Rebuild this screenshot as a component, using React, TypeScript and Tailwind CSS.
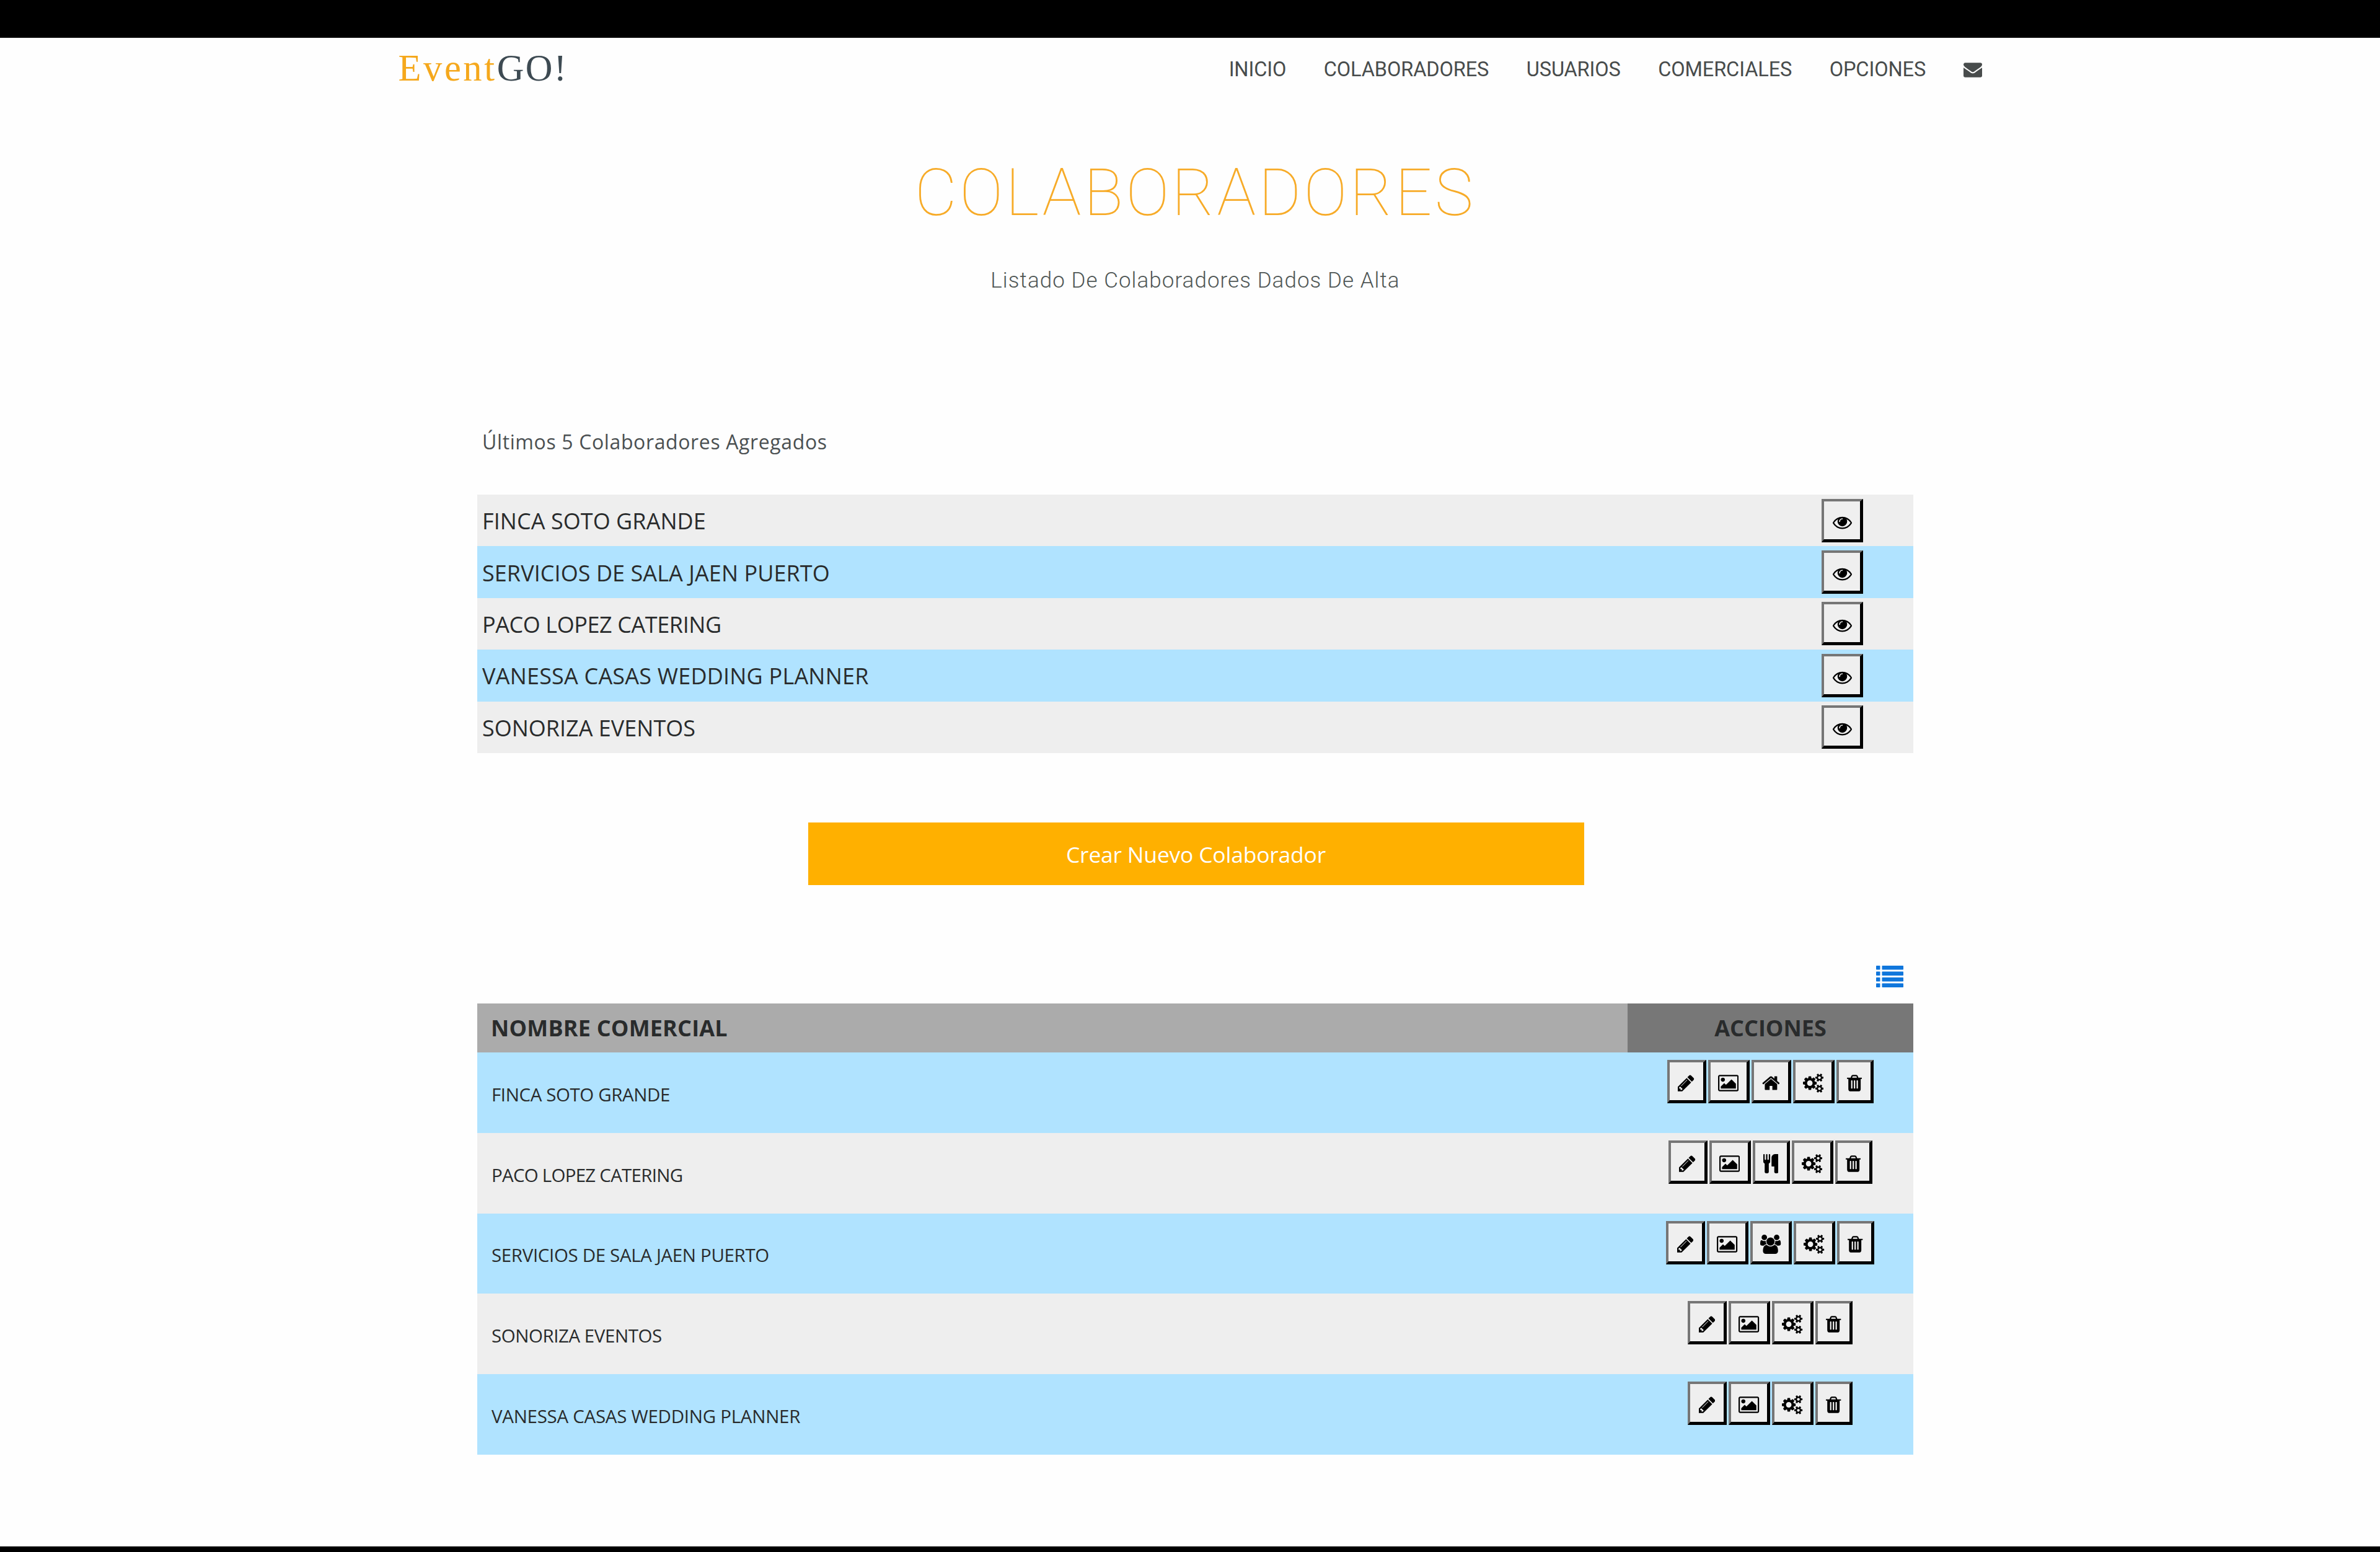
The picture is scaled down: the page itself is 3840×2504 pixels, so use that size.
import clsx from "clsx";

const navLinks = ["INICIO", "COLABORADORES", "USUARIOS", "COMERCIALES", "OPCIONES"];

const latest = [
  { name: "FINCA SOTO GRANDE", tracking: "tracking-[0.06px]" },
  { name: "SERVICIOS DE SALA JAEN PUERTO", tracking: "tracking-[0.06px]" },
  { name: "PACO LOPEZ CATERING", tracking: "tracking-[-0.42px]" },
  { name: "VANESSA CASAS WEDDING PLANNER", tracking: "tracking-[0.2px]" },
  { name: "SONORIZA EVENTOS", tracking: "tracking-normal" },
];

const icons = {
  eye: {
    viewBox: "0 0 1792 1792",
    d: "M1664 960q-152-236-381-353 61 104 61 225 0 185-131.5 316.5t-316.5 131.5-316.5-131.5-131.5-316.5q0-121 61-225-229 117-381 353 133 205 333.5 326.5t434.5 121.5 434.5-121.5 333.5-326.5zm-720-384q0-20-14-34t-34-14q-125 0-214.5 89.5t-89.5 214.5q0 20 14 34t34 14 34-14 14-34q0-86 61-147t147-61q20 0 34-14t14-34zm848 384q0 34-20 69-140 230-376.5 368.5t-499.5 138.5-499.5-139-376.5-368q-20-35-20-69t20-69q140-229 376.5-368t499.5-139 499.5 139 376.5 368q20 35 20 69z",
  },
  envelope: {
    viewBox: "0 0 1792 1792",
    d: "M1792 710v794q0 66-47 113t-113 47h-1472q-66 0-113-47t-47-113v-794q44 49 101 87 362 246 497 345 57 42 92.5 65.5t94.5 48 110 24.5h2q51 0 110-24.5t94.5-48 92.5-65.5q170-123 498-345 57-39 100-87zm0-294q0 79-49 151t-122 123q-376 261-468 325-10 7-42.5 31t-54 38.5-52 32.5-57.5 27-50 9h-2q-23 0-50-9t-57.5-27-52-32.5-54-38.5-42.5-31q-91-64-262-182.5t-205-142.5q-62-42-117-115.5t-55-136.5q0-78 41.5-130t118.5-52h1472q65 0 112.5 47t47.5 113z",
  },
  pencil: {
    viewBox: "128 0 1536 1792",
    d: "M491 1536l91-91-235-235-91 91v107h128v128h107zm523-928q0-22-22-22-10 0-17 7l-542 542q-7 7-7 17 0 22 22 22 10 0 17-7l542-542q7-7 7-17zm-54-192l416 416-832 832h-416v-416zm683 96q0 53-37 90l-166 166-416-416 166-165q36-38 90-38 53 0 91 38l235 234q37 39 37 91z",
  },
  picture: {
    viewBox: "-64 0 1920 1792",
    d: "M576 576q0 80-56 136t-136 56-136-56-56-136 56-136 136-56 136 56 56 136zm1024 384v448h-1408v-192l320-320 160 160 512-512zm96-704h-1600q-13 0-22.5 9.5t-9.5 22.5v1216q0 13 9.5 22.5t22.5 9.5h1600q13 0 22.5-9.5t9.5-22.5v-1216q0-13-9.5-22.5t-22.5-9.5zm160 32v1216q0 66-47 113t-113 47h-1600q-66 0-113-47t-47-113v-1216q0-66 47-113t113-47h1600q66 0 113 47t47 113z",
  },
  home: {
    viewBox: "64 0 1664 1792",
    d: "M1472 992v480q0 26-19 45t-45 19h-384v-384h-256v384h-384q-26 0-45-19t-19-45v-480q0-1 .5-3t.5-3l575-474 575 474q1 2 1 6zm223-69l-62 74q-8 9-21 11h-3q-13 0-21-7l-692-577-692 577q-12 8-24 7-13-2-21-11l-62-74q-8-10-7-23.5t11-21.5l719-599q32-26 76-26t76 26l244 204v-195q0-14 9-23t23-9h192q14 0 23 9t9 23v408l219 182q10 8 11 21.5t-7 23.5z",
  },
  cutlery: {
    viewBox: "192 0 1408 1792",
    d: "M832 64v640q0 61-35.5 111t-92.5 70v779q0 52-38 90t-90 38h-128q-52 0-90-38t-38-90v-779q-57-20-92.5-70t-35.5-111v-640q0-26 19-45t45-19 45 19 19 45v416q0 26 19 45t45 19 45-19 19-45v-416q0-26 19-45t45-19 45 19 19 45v416q0 26 19 45t45 19 45-19 19-45v-416q0-26 19-45t45-19 45 19 19 45zm768 0v1600q0 52-38 90t-90 38h-128q-52 0-90-38t-38-90v-512h-224q-13 0-22.5-9.5t-9.5-22.5v-800q0-132 94-226t226-94h256q26 0 45 19t19 45z",
  },
  users: {
    viewBox: "0 0 1920 1792",
    d: "M593 896q-162 5-265 128h-134q-82 0-138-40.5t-56-118.5q0-353 124-353 6 0 43.5 21t97.5 42.5 119 21.5q67 0 133-23-5 37-5 66 0 143 83 256zm1071 637q0 120-73 189.5t-194 69.5h-874q-121 0-194-69.5t-73-189.5q0-53 3.5-103.5t14-109 26.5-108.5 43-97.5 62-81 85.5-53.5 111.5-20q10 0 43 21.5t73 48 107 48 135 21.5 135-21.5 107-48 73-48 43-21.5q61 0 111.5 20t85.5 53.5 62 81 43 97.5 26.5 108.5 14 109 3.5 103.5zm-1024-1277q0 106-75 181t-181 75-181-75-75-181 75-181 181-75 181 75 75 181zm704 384q0 159-112.5 271.5t-271.5 112.5-271.5-112.5-112.5-271.5 112.5-271.5 271.5-112.5 271.5 112.5 112.5 271.5zm576 225q0 78-56 118.5t-138 40.5h-134q-103-123-265-128 83-113 83-256 0-29-5-66 66 23 133 23 59 0 119-21.5t97.5-42.5 43.5-21q124 0 124 353zm-128-609q0 106-75 181t-181 75-181-75-75-181 75-181 181-75 181 75 75 181z",
  },
  cogs: {
    viewBox: "-64 0 1920 1792",
    d: "M832 896q0-106-75-181t-181-75-181 75-75 181 75 181 181 75 181-75 75-181zm768 512q0-52-38-90t-90-38-90 38-38 90q0 53 37.5 90.5t90.5 37.5 90.5-37.5 37.5-90.5zm0-1024q0-52-38-90t-90-38-90 38-38 90q0 53 37.5 90.5t90.5 37.5 90.5-37.5 37.5-90.5zm-384 421v185q0 10-7 19.5t-16 10.5l-155 24q-11 35-32 76 34 48 90 115 7 11 7 20 0 12-7 19-23 30-82.5 89.5t-78.5 59.5q-11 0-21-7l-115-90q-37 19-77 31-11 108-23 155-7 24-30 24h-186q-11 0-20-7.5t-10-17.5l-23-153q-34-10-75-31l-118 89q-7 7-20 7-11 0-21-8-144-133-144-160 0-9 7-19 10-14 41-53t47-61q-23-44-35-82l-152-24q-10-1-17-9.5t-7-19.5v-185q0-10 7-19.5t16-10.5l155-24q11-35 32-76-34-48-90-115-7-11-7-20 0-12 7-20 22-30 82-89t79-59q11 0 21 7l115 90q34-18 77-32 11-108 23-154 7-24 30-24h186q11 0 20 7.5t10 17.5l23 153q34 10 75 31l118-89q8-7 20-7 11 0 21 8 144 133 144 160 0 8-7 19-12 16-42 54t-45 60q23 48 34 82l152 23q10 2 17 10.5t7 19.5zm640 533v140q0 16-149 31-12 27-30 52 51 113 51 138 0 4-4 7-122 71-124 71-8 0-46-47t-52-68q-20 2-30 2t-30-2q-14 21-52 68t-46 47q-2 0-124-71-4-3-4-7 0-25 51-138-18-25-30-52-149-15-149-31v-140q0-16 149-31 13-29 30-52-51-113-51-138 0-4 4-7 4-2 35-20t59-34 30-16q8 0 46 46.5t52 67.5q20-2 30-2t30 2q51-71 92-112l6-2q4 0 124 70 4 3 4 7 0 25-51 138 17 23 30 52 149 15 149 31zm0-1024v140q0 16-149 31-12 27-30 52 51 113 51 138 0 4-4 7-122 71-124 71-8 0-46-47t-52-68q-20 2-30 2t-30-2q-14 21-52 68t-46 47q-2 0-124-71-4-3-4-7 0-25 51-138-18-25-30-52-149-15-149-31v-140q0-16 149-31 13-29 30-52-51-113-51-138 0-4 4-7 4-2 35-20t59-34 30-16q8 0 46 46.5t52 67.5q20-2 30-2t30 2q51-71 92-112l6-2q4 0 124 70 4 3 4 7 0 25-51 138 17 23 30 52 149 15 149 31z",
  },
  trash: {
    viewBox: "192 0 1408 1792",
    d: "M704 1376v-704q0-14-9-23t-23-9h-64q-14 0-23 9t-9 23v704q0 14 9 23t23 9h64q14 0 23-9t9-23zm256 0v-704q0-14-9-23t-23-9h-64q-14 0-23 9t-9 23v704q0 14 9 23t23 9h64q14 0 23-9t9-23zm256 0v-704q0-14-9-23t-23-9h-64q-14 0-23 9t-9 23v704q0 14 9 23t23 9h64q14 0 23-9t9-23zm-544-992h448l-48-117q-7-9-17-11h-317q-10 2-17 11zm928 32v64q0 14-9 23t-23 9h-96v948q0 83-47 143.5t-113 60.5h-832q-66 0-113-58.5t-47-141.5v-952h-96q-14 0-23-9t-9-23v-64q0-14 9-23t23-9h309l70-167q15-37 54-63t79-26h320q40 0 79 26t54 63l70 167h309q14 0 23 9t9 23z",
  },
};

type IconName = keyof typeof icons;

const colaboradores: { name: string; tracking: string; actions: IconName[] }[] = [
  { name: "FINCA SOTO GRANDE", tracking: "tracking-[-0.4px]", actions: ["pencil", "picture", "home", "cogs", "trash"] },
  { name: "PACO LOPEZ CATERING", tracking: "tracking-[-0.75px]", actions: ["pencil", "picture", "cutlery", "cogs", "trash"] },
  { name: "SERVICIOS DE SALA JAEN PUERTO", tracking: "tracking-[-0.35px]", actions: ["pencil", "picture", "users", "cogs", "trash"] },
  { name: "SONORIZA EVENTOS", tracking: "tracking-[-0.45px]", actions: ["pencil", "picture", "cogs", "trash"] },
  { name: "VANESSA CASAS WEDDING PLANNER", tracking: "tracking-[-0.28px]", actions: ["pencil", "picture", "cogs", "trash"] },
];

const buttonWidths: Record<IconName, string> = {
  eye: "w-[67px]",
  envelope: "w-[66px]",
  pencil: "w-[63px]",
  picture: "w-[67px]",
  home: "w-[64px]",
  cutlery: "w-[60px]",
  users: "w-[67px]",
  cogs: "w-[67px]",
  trash: "w-[60px]",
};

function Icon({ name, className }: { name: IconName; className?: string }) {
  return (
    <svg viewBox={icons[name].viewBox} fill="currentColor" className={clsx("w-auto shrink-0", className)}>
      <path d={icons[name].d} />
    </svg>
  );
}

function IconButton({ name }: { name: IconName }) {
  return (
    <button
      className={clsx(
        "flex h-[70px] shrink-0 items-center justify-center border-4 border-r-5 border-b-5 border-t-[#767676] border-r-black border-b-black border-l-[#767676] bg-[#efefef] pt-1.5 text-black",
        buttonWidths[name]
      )}
    >
      <Icon name={name} className="h-[31px]" />
    </button>
  );
}

function ListIcon() {
  return (
    <svg viewBox="0 0 44 35" fill="currentColor" className="h-[35px] w-[44px]">
      {[0, 9.5, 19, 28.5].map((y) => (
        <g key={y}>
          <rect x="0" y={y} width="6.5" height="6.5" rx="0.8" />
          <rect x="9.5" y={y} width="34.5" height="6.5" rx="0.8" />
        </g>
      ))}
    </svg>
  );
}

export default function App() {
  return (
    <div className="flex h-[2504px] w-[3840px] flex-col overflow-hidden border-t-[61px] border-b-[9px] border-black bg-[#fefefe] font-['Open_Sans',sans-serif] text-[#292b2c]">
      <header className="mx-auto flex h-[103px] w-[2555px] shrink-0 items-center justify-between">
        <a className="flex pb-1.5 font-['Liberation_Serif',serif] text-[60.5px] leading-[70px]">
          <span className="tracking-[3.6px] text-[#f5a81c]">Event</span>
          <span className="tracking-[2.4px] text-[#3d4a52]">GO!</span>
        </a>
        <nav className="flex items-center gap-[60.4px] font-['Roboto',sans-serif] text-[32.6px] tracking-[-0.14px] text-[#484c4c]">
          {navLinks.map((link) => (
            <a key={link}>{link}</a>
          ))}
          <Icon name="envelope" className="h-[30px]" />
        </nav>
      </header>

      <main className="ml-[770px] flex w-[2317px] flex-col">
        <h1 className="mt-[85px] text-center font-['Roboto',sans-serif] text-[105px] leading-[126px] font-thin tracking-[4.28px] text-[#f7ab28]">
          COLABORADORES
        </h1>
        <p className="mt-[52px] text-center font-['Roboto',sans-serif] text-[35px] leading-[52px] font-light tracking-[1.05px] text-[#4f5655]">
          Listado De Colaboradores Dados De Alta
        </p>

        <h5 className="mt-[210px] ml-[8px] text-[32px] leading-[48px] tracking-[0.62px] text-[#4b5052]">
          Últimos 5 Colaboradores Agregados
        </h5>
        <div className="mt-[61px]">
          {latest.map((item) => (
            <div
              key={item.name}
              className="flex h-[83.4px] items-center justify-between bg-[#eeeeee] pr-[81px] pl-[8px] even:bg-[#b0e3ff]"
            >
              <span className={clsx("pt-[3px] text-[36px]", item.tracking)}>{item.name}</span>
              <IconButton name="eye" />
            </div>
          ))}
        </div>

        <button className="mt-[112px] ml-0.5 h-[101px] w-[1252px] self-center bg-[#ffb000] pt-0.5 text-[35.5px] tracking-[-0.23px] text-white">
          Crear Nuevo Colaborador
        </button>

        <div className="mt-[130px] mr-[16px] mb-[26px] self-end text-[#0f76dc]">
          <ListIcon />
        </div>

        <div className="flex h-[79px] items-center text-[36px] font-bold">
          <div className="flex h-full flex-1 items-center bg-[#ababab] pt-px pl-[22px] tracking-[0.19px]">NOMBRE COMERCIAL</div>
          <div className="flex h-full w-[461px] items-center justify-center bg-[#777777] pt-px">ACCIONES</div>
        </div>
        {colaboradores.map((item, idx) => (
          <div key={item.name} className={clsx("flex h-[129.8px]", idx % 2 === 0 ? "bg-[#b0e3ff]" : "bg-[#eeeeee]")}>
            <div className="flex flex-1 items-center pt-1.5 pl-[23px]">
              <span className={clsx("text-[29.5px]", item.tracking)}>{item.name}</span>
            </div>
            <div className="flex w-[461px] items-start justify-center gap-[3px] pt-3 pr-px">
              {item.actions.map((action) => (
                <IconButton key={action} name={action} />
              ))}
            </div>
          </div>
        ))}
      </main>
    </div>
  );
}
